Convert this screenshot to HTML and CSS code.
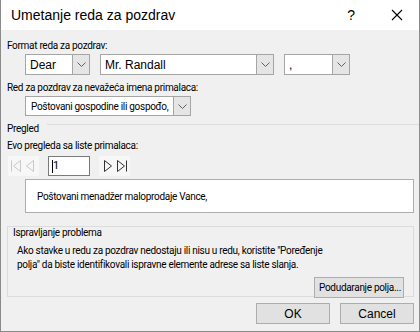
FILE: index.html
```html
<!DOCTYPE html>
<html lang="sr">
<head>
    <meta charset="UTF-8">
    <title>Umetanje reda za pozdrav</title>
    <link rel="stylesheet" href="styles.css">
</head>
<body>
    <div class="window">
        <div class="titlebar">
            <span class="title">Umetanje reda za pozdrav</span>
            <span class="help">?</span>
            <span class="close">
                <svg width="12" height="12" viewBox="0 0 12 12"><path d="M1 1 L11 11 M11 1 L1 11" stroke="#000" stroke-width="1.1" fill="none"/></svg>
            </span>
        </div>

        <div class="content">
            <div class="label">Format reda za pozdrav:</div>
            <div class="combo-row">
                <div class="combo combo-dear">
                    <span class="combo-text big">Dear</span>
                    <span class="combo-btn"><svg width="9" height="5" viewBox="0 0 9 5"><path d="M0.5 0.5 L4.5 4.5 L8.5 0.5" stroke="#606060" fill="none"/></svg></span>
                </div>
                <div class="combo combo-name">
                    <span class="combo-text big">Mr. Randall</span>
                    <span class="combo-btn"><svg width="9" height="5" viewBox="0 0 9 5"><path d="M0.5 0.5 L4.5 4.5 L8.5 0.5" stroke="#606060" fill="none"/></svg></span>
                </div>
                <div class="combo combo-punct">
                    <span class="combo-text big">,</span>
                    <span class="combo-btn"><svg width="9" height="5" viewBox="0 0 9 5"><path d="M0.5 0.5 L4.5 4.5 L8.5 0.5" stroke="#606060" fill="none"/></svg></span>
                </div>
            </div>

            <div class="label label-invalid">Red za pozdrav za nevažeća imena primalaca:</div>
            <div class="combo-row">
                <div class="combo combo-invalid">
                    <span class="combo-text">Poštovani gospodine ili gospođo,</span>
                    <span class="combo-btn"><svg width="9" height="5" viewBox="0 0 9 5"><path d="M0.5 0.5 L4.5 4.5 L8.5 0.5" stroke="#606060" fill="none"/></svg></span>
                </div>
            </div>

            <div class="section">
                <span>Pregled</span>
                <span class="section-line"></span>
            </div>

            <div class="label label-preview">Evo pregleda sa liste primalaca:</div>
            <div class="nav-row">
                <div class="nav-group disabled">
                    <svg width="14" height="14" viewBox="0 0 14 14"><path d="M2.5 1.5 V12.5 M11.5 1.5 L4.5 7 L11.5 12.5 Z" stroke="#c8c8c8" fill="none"/></svg>
                    <svg width="14" height="14" viewBox="0 0 14 14"><path d="M9.5 1.5 L2.5 7 L9.5 12.5 Z" stroke="#c8c8c8" fill="none"/></svg>
                </div>
                <div class="nav-input"><span class="caret"></span>1</div>
                <div class="nav-group">
                    <svg width="14" height="14" viewBox="0 0 14 14"><path d="M4.5 1.5 L11.5 7 L4.5 12.5 Z" stroke="#333" fill="none"/></svg>
                    <svg width="14" height="14" viewBox="0 0 14 14"><path d="M2.5 1.5 L9.5 7 L2.5 12.5 Z M11.5 1.5 V12.5" stroke="#333" fill="none"/></svg>
                </div>
            </div>

            <div class="preview">Poštovani menadžer maloprodaje Vance,</div>

            <div class="groupbox">
                <div class="group-title">Ispravljanje problema</div>
                <p class="group-text">Ako stavke u redu za pozdrav nedostaju ili nisu u redu, koristite "Poređenje<br>polja" da biste identifikovali ispravne elemente adrese sa liste slanja.</p>
                <div class="group-actions">
                    <button class="btn btn-match">Podudaranje polja...</button>
                </div>
            </div>

            <div class="footer">
                <button class="btn btn-ok">OK</button>
                <button class="btn btn-cancel">Cancel</button>
            </div>
        </div>
    </div>
</body>
</html>
```

FILE: styles.css
```css
html, body {
    margin: 0;
    padding: 0;
}
body {
    font-family: Roboto, "Liberation Sans", Arial, sans-serif;
    font-size: 10px;
    letter-spacing: -0.3px;
    color: #000;
    background-color: #f0f0f0;
}
.window {
    width: 418px;
    height: 331px;
    border-left: 1px solid #8a8a8a;
    border-right: 1px solid #8a8a8a;
    border-bottom: 1px solid #8a8a8a;
    background-color: #f0f0f0;
    display: flex;
    flex-direction: column;
}
.titlebar {
    height: 30px;
    background-color: #fff;
    display: flex;
    align-items: center;
    flex-shrink: 0;
    font-family: "Liberation Sans", Arial, sans-serif;
    letter-spacing: 0;
}
.title {
    font-size: 14px;
    margin-left: 10px;
    flex: 1;
}
.help {
    font-size: 14px;
    margin-right: 36px;
}
.close {
    display: flex;
    margin-right: 16px;
}
.content {
    padding: 0 5px 0 6px;
    display: flex;
    flex-direction: column;
}
.label {
    height: 14px;
    line-height: 14px;
    margin-top: 9px;
}
.combo-row {
    display: flex;
    gap: 10px;
    margin-left: 18px;
    margin-top: 1px;
}
.combo {
    height: 19px;
    border: 1px solid #a5a5a5;
    background-color: #fff;
    display: flex;
    align-items: center;
    box-sizing: content-box;
}
.combo-text {
    flex: 1;
    padding-left: 5px;
    white-space: nowrap;
    overflow: hidden;
}
.combo-text.big {
    font-family: "Liberation Sans", Arial, sans-serif;
    font-size: 12px;
    letter-spacing: 0;
    padding-left: 4px;
}
.combo-btn {
    width: 16px;
    height: 19px;
    background-color: #e5e5e5;
    border-left: 1px solid #a5a5a5;
    display: flex;
    align-items: center;
    justify-content: center;
}
.combo-dear { width: 63px; }
.combo-name { width: 172px; }
.combo-punct { width: 64px; }
.combo-invalid {
    width: 164px;
    height: 18px;
}
.combo-invalid .combo-btn { height: 18px; }
.label-invalid { margin-top: 6px; }
.section {
    display: flex;
    align-items: center;
    margin-top: 5px;
    height: 14px;
    margin-right: -5px;
}
.section-line {
    flex: 1;
    height: 1px;
    background-color: #dcdcdc;
    margin-left: 8px;
    margin-top: -7px;
}
.label-preview { margin-top: 4px; }
.nav-row {
    display: flex;
    align-items: center;
    margin-top: 3px;
    height: 20px;
}
.nav-group {
    display: flex;
    gap: 1px;
    height: 20px;
    align-items: center;
    padding: 0 1px;
    background-color: #f7f7f7;
}
.nav-group.disabled {
    margin-left: 1px;
}
.nav-input {
    width: 37px;
    height: 18px;
    border: 1px solid #7a7a7a;
    background-color: #fff;
    margin: 0 9px 0 9px;
    line-height: 18px;
    padding-left: 3px;
    box-sizing: content-box;
    display: flex;
    align-items: center;
    font-size: 11px;
}
.caret {
    width: 1px;
    height: 13px;
    background-color: #000;
}
.preview {
    margin: 3px 0 0 18px;
    height: 32px;
    border: 1px solid #adadad;
    background-color: #fff;
    line-height: 34px;
    padding-left: 11px;
}
.groupbox {
    margin-top: 13px;
    height: 69px;
    border: 1px solid #dcdcdc;
    padding: 0 9px 0 9px;
    display: flex;
    flex-direction: column;
}
.group-title {
    margin-left: -4px;
    line-height: 12px;
    height: 12px;
}
.group-text {
    margin: 5px 0 0 0;
    line-height: 14px;
    white-space: nowrap;
}
.group-actions {
    display: flex;
    justify-content: flex-end;
    margin-top: 5px;
}
.btn {
    font-family: Roboto, "Liberation Sans", Arial, sans-serif;
    font-size: 10px;
    letter-spacing: -0.3px;
    background-color: #e1e1e1;
    border: 1px solid #adadad;
    color: #000;
    height: 21px;
    padding: 0;
    margin: 0;
}
.btn-match {
    width: 90px;
    text-align: right;
    padding-right: 2px;
}
.footer {
    display: flex;
    justify-content: flex-end;
    gap: 10px;
    margin-top: 6px;
}
.btn-ok, .btn-cancel {
    width: 74px;
    font-family: "Liberation Sans", Arial, sans-serif;
    font-size: 12px;
    letter-spacing: 0;
}
```
